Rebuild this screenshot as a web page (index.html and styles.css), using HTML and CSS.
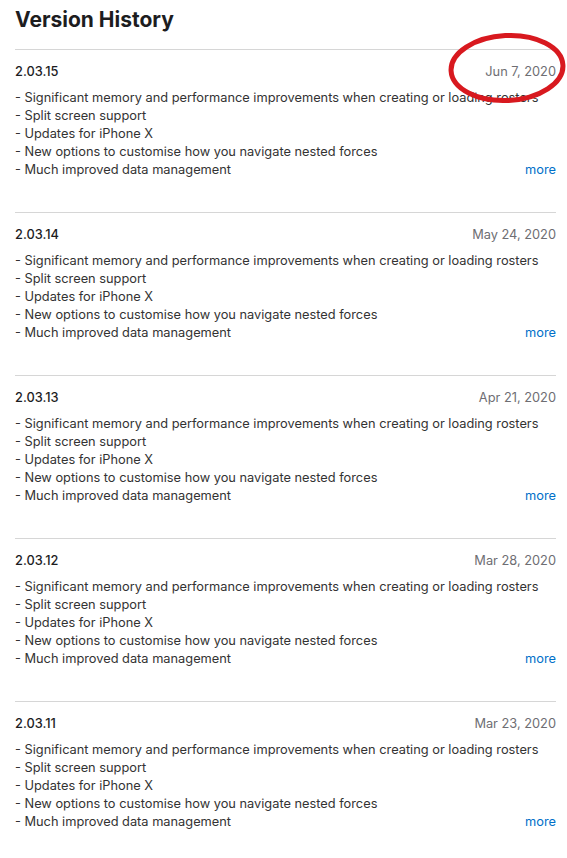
FILE: index.html
```html
<!DOCTYPE html>
<html lang="en">
<head>
  <meta charset="UTF-8">
  <meta name="viewport" content="width=device-width, initial-scale=1.0">
  <title>Version History</title>
  <link rel="stylesheet" href="styles.css">
</head>
<body>

  <div class="page">
    <h2 class="title">Version History</h2>

    <div class="release">
      <div class="release-head">
        <span class="version">2.03.15</span>
        <span class="date">Jun 7, 2020</span>
      </div>
      <div class="notes">
        <p>- Significant memory and performance improvements when creating or loading rosters</p>
        <p>- Split screen support</p>
        <p>- Updates for iPhone X</p>
        <p>- New options to customise how you navigate nested forces</p>
        <p class="last">- Much improved data management <a class="more" href="#">more</a></p>
      </div>
    </div>

    <div class="release">
      <div class="release-head">
        <span class="version">2.03.14</span>
        <span class="date">May 24, 2020</span>
      </div>
      <div class="notes">
        <p>- Significant memory and performance improvements when creating or loading rosters</p>
        <p>- Split screen support</p>
        <p>- Updates for iPhone X</p>
        <p>- New options to customise how you navigate nested forces</p>
        <p class="last">- Much improved data management <a class="more" href="#">more</a></p>
      </div>
    </div>

    <div class="release">
      <div class="release-head">
        <span class="version">2.03.13</span>
        <span class="date">Apr 21, 2020</span>
      </div>
      <div class="notes">
        <p>- Significant memory and performance improvements when creating or loading rosters</p>
        <p>- Split screen support</p>
        <p>- Updates for iPhone X</p>
        <p>- New options to customise how you navigate nested forces</p>
        <p class="last">- Much improved data management <a class="more" href="#">more</a></p>
      </div>
    </div>

    <div class="release">
      <div class="release-head">
        <span class="version">2.03.12</span>
        <span class="date">Mar 28, 2020</span>
      </div>
      <div class="notes">
        <p>- Significant memory and performance improvements when creating or loading rosters</p>
        <p>- Split screen support</p>
        <p>- Updates for iPhone X</p>
        <p>- New options to customise how you navigate nested forces</p>
        <p class="last">- Much improved data management <a class="more" href="#">more</a></p>
      </div>
    </div>

    <div class="release">
      <div class="release-head">
        <span class="version">2.03.11</span>
        <span class="date">Mar 23, 2020</span>
      </div>
      <div class="notes">
        <p>- Significant memory and performance improvements when creating or loading rosters</p>
        <p>- Split screen support</p>
        <p>- Updates for iPhone X</p>
        <p>- New options to customise how you navigate nested forces</p>
        <p class="last">- Much improved data management <a class="more" href="#">more</a></p>
      </div>
    </div>

    <!-- hand-drawn annotation round the first date -->
    <svg class="circle-mark" width="124" height="76" viewBox="0 0 124 76">
      <ellipse cx="62" cy="38" rx="56" ry="32.5" fill="none" stroke="#d8191f" stroke-width="5" transform="rotate(-3 62 38)"/>
    </svg>
  </div>

</body>
</html>
```

FILE: styles.css
```css
body {
  margin: 0;
  background-color: #ffffff;
  font-family: Inter, "Open Sans", sans-serif;
  color: #333333;
}
.page {
  position: relative;
  padding: 6px 11px 0 15px;
}
.title {
  margin: 0 0 15px 0;
  font-size: 21px;
  line-height: 28px;
  font-weight: 700;
  color: #1d1d1f;
}
.release {
  border-top: 1px solid #d6d6d6;
  padding: 11px 0 33px 0;
}
.release-head {
  display: flex;
  justify-content: space-between;
  align-items: center;
  height: 20px;
  margin-bottom: 8px;
}
.version {
  font-size: 12.8px;
  font-weight: 500;
  color: #1d1d1f;
}
.date {
  font-size: 12.8px;
  color: #6e6e73;
}
.notes p {
  margin: 0;
  font-size: 12.8px;
  line-height: 18px;
}
.notes .last {
  display: flex;
  justify-content: space-between;
}
.more {
  color: #0070c9;
  text-decoration: none;
}
.circle-mark {
  position: absolute;
  left: 445px;
  top: 30px;
}
```
